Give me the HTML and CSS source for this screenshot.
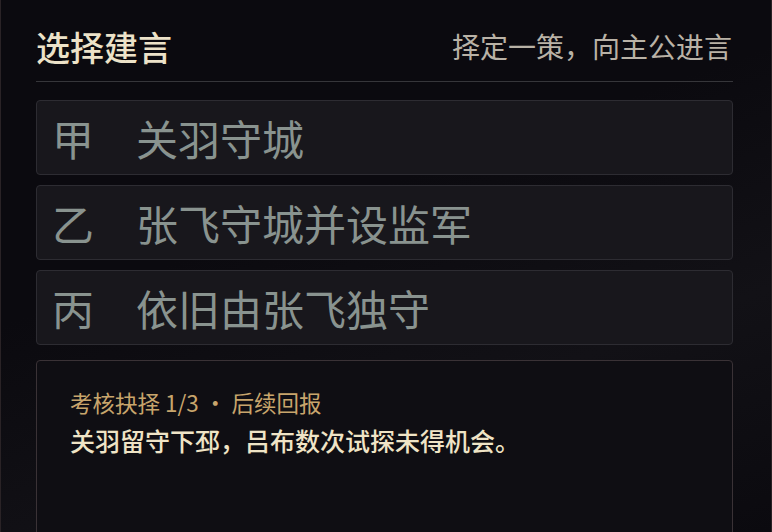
FILE: index.html
```html
<!DOCTYPE html>
<html lang="zh-CN">
<head>
  <meta charset="UTF-8">
  <title>选择建言</title>
  <link rel="stylesheet" href="styles.css">
</head>
<body>

  <div class="panel">
    <header class="panel-head">
      <h1 class="panel-title">选择建言</h1>
      <p class="panel-hint">择定一策，向主公进言</p>
    </header>

    <ul class="options">
      <li class="option"><span class="option-key">甲</span><span class="option-text">关羽守城</span></li>
      <li class="option"><span class="option-key">乙</span><span class="option-text">张飞守城并设监军</span></li>
      <li class="option"><span class="option-key">丙</span><span class="option-text">依旧由张飞独守</span></li>
    </ul>

    <section class="report">
      <p class="report-tag">考核抉择 1/3 · 后续回报</p>
      <p class="report-text">关羽留守下邳，吕布数次试探未得机会。</p>
    </section>
  </div>

</body>
</html>
```

FILE: styles.css
```css
body {
  margin: 0;
  height: 100vh;
  overflow: hidden;
  background-color: #0b0a0f;
  font-family: "Noto Sans CJK SC", "Noto Sans", sans-serif;
}

.panel {
  height: 100%;
  box-sizing: border-box;
  padding: 0 38px 0 35px;
  border-left: 1px solid #2a2326;
  border-right: 1px solid #2a2326;
  background: linear-gradient(160deg, #0b0a0f 40%, #121116 70%, #0b0a0f 100%);
}

.panel-head {
  display: flex;
  justify-content: space-between;
  align-items: center;
  height: 82px;
  box-sizing: border-box;
  padding-top: 12px;
  border-bottom: 1px solid #36363a;
}

.panel-title {
  margin: 0;
  font-size: 34px;
  font-weight: 500;
  line-height: 1.4;
  color: #ece2c8;
}

.panel-hint {
  margin: 0 1px 0 0;
  font-size: 28px;
  line-height: 1.4;
  color: #b9b2a6;
}

.options {
  list-style: none;
  margin: 18px 0 0;
  padding: 0;
  display: flex;
  flex-direction: column;
  gap: 10px;
}

.option {
  display: flex;
  align-items: center;
  height: 75px;
  box-sizing: border-box;
  padding-left: 15px;
  border: 1px solid #2d2c32;
  border-radius: 4px;
  background-color: #18171c;
  color: #89938f;
  font-size: 42px;
}

.option-key {
  width: 84px;
}

.report {
  margin-top: 15px;
  height: 300px;
  box-sizing: border-box;
  padding: 25px 33px;
  border: 1px solid #3a3236;
  border-radius: 4px;
  background-color: #0f0e13;
}

.report-tag {
  margin: 0;
  font-size: 22.5px;
  line-height: 1.45;
  color: #c8a56c;
}

.report-text {
  margin: 3px 0 0;
  font-size: 25px;
  font-weight: 500;
  line-height: 1.5;
  color: #efe4c6;
}
```
